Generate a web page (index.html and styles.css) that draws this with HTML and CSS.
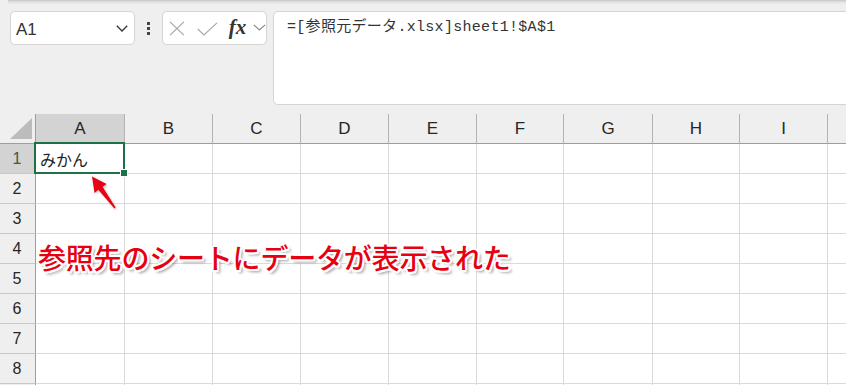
FILE: index.html
```html
<!DOCTYPE html>
<html lang="ja">
<head>
<meta charset="utf-8">
<title>Excel 参照</title>
<link rel="stylesheet" href="styles.css">
</head>
<body>
<div class="ribbon-edge"></div>
<div class="toolbar">
  <div class="namebox">
    <span class="nb-text">A1</span>
    <svg class="nb-chev" width="12" height="7" viewBox="0 0 12 7"><polyline points="0.8,0.8 6,6 11.2,0.8" fill="none" stroke="#333" stroke-width="1.3"/></svg>
  </div>
  <div class="dots"><span></span><span></span><span></span></div>
  <div class="fbtns">
    <svg class="ic-x" width="16" height="15" viewBox="0 0 16 15"><path d="M1 0.8 L15 14.2 M15 0.8 L1 14.2" stroke="#aaa" stroke-width="1.3" fill="none"/></svg>
    <svg class="ic-ok" width="21" height="14" viewBox="0 0 21 14"><polyline points="0.8,7 7,13 20.2,0.8" fill="none" stroke="#aaa" stroke-width="1.3"/></svg>
    <span class="fx">fx</span>
    <svg class="ic-chev" width="13" height="7" viewBox="0 0 13 7"><polyline points="0.8,0.8 6.5,6 12.2,0.8" fill="none" stroke="#888" stroke-width="1.2"/></svg>
  </div>
  <div class="formula">=[参照元データ.xlsx]sheet1!$A$1</div>
</div>
<div class="sheet">
<div class="grid">
  <div class="corner"><svg width="24" height="23" viewBox="0 0 24 23"><polygon points="1,22 23,22 23,1" fill="#bcbcbc"/></svg></div>
  <div class="ch sel">A</div><div class="ch">B</div><div class="ch">C</div><div class="ch">D</div><div class="ch">E</div><div class="ch">F</div><div class="ch">G</div><div class="ch">H</div><div class="ch">I</div><div class="ch"></div>

  <div class="rh sel">1</div><div class="c a1"><span>みかん</span><div class="selbox"><div class="handle"></div></div></div><div class="c"></div><div class="c"></div><div class="c"></div><div class="c"></div><div class="c"></div><div class="c"></div><div class="c"></div><div class="c"></div><div class="c"></div>
  <div class="rh">2</div><div class="c"></div><div class="c"></div><div class="c"></div><div class="c"></div><div class="c"></div><div class="c"></div><div class="c"></div><div class="c"></div><div class="c"></div><div class="c"></div>
  <div class="rh">3</div><div class="c"></div><div class="c"></div><div class="c"></div><div class="c"></div><div class="c"></div><div class="c"></div><div class="c"></div><div class="c"></div><div class="c"></div><div class="c"></div>
  <div class="rh">4</div><div class="c"></div><div class="c"></div><div class="c"></div><div class="c"></div><div class="c"></div><div class="c"></div><div class="c"></div><div class="c"></div><div class="c"></div><div class="c"></div>
  <div class="rh">5</div><div class="c"></div><div class="c"></div><div class="c"></div><div class="c"></div><div class="c"></div><div class="c"></div><div class="c"></div><div class="c"></div><div class="c"></div><div class="c"></div>
  <div class="rh">6</div><div class="c"></div><div class="c"></div><div class="c"></div><div class="c"></div><div class="c"></div><div class="c"></div><div class="c"></div><div class="c"></div><div class="c"></div><div class="c"></div>
  <div class="rh">7</div><div class="c"></div><div class="c"></div><div class="c"></div><div class="c"></div><div class="c"></div><div class="c"></div><div class="c"></div><div class="c"></div><div class="c"></div><div class="c"></div>
  <div class="rh">8</div><div class="c"></div><div class="c"></div><div class="c"></div><div class="c"></div><div class="c"></div><div class="c"></div><div class="c"></div><div class="c"></div><div class="c"></div><div class="c"></div>
  <div class="rh"></div><div class="c"></div><div class="c"></div><div class="c"></div><div class="c"></div><div class="c"></div><div class="c"></div><div class="c"></div><div class="c"></div><div class="c"></div><div class="c"></div>
</div>
</div>
<svg class="arrow" width="846" height="385" viewBox="0 0 846 385">
  <defs>
    <filter id="sh" x="-50%" y="-50%" width="200%" height="200%"><feDropShadow dx="1" dy="1" stdDeviation="0.8" flood-color="#000" flood-opacity="0.3"/></filter>
  </defs>
  <polygon filter="url(#sh)" fill="#e60012" points="92,176.5 106.5,184 102.5,186.8 115.6,207.6 114.4,208.4 98.3,189.8 94.5,193"/>
</svg>
<div class="note">参照先のシートにデータが表示された</div>
</body>
</html>
```
FILE: styles.css
```css
* { box-sizing: border-box; }
html, body { margin: 0; padding: 0; }
body {
  width: 846px;
  height: 385px;
  overflow: hidden;
  position: relative;
  background: #efefef;
  font-family: "Liberation Sans", "Noto Sans CJK JP", sans-serif;
  color: #333;
}
.ribbon-edge {
  height: 4px;
  margin-left: 8px;
  background: linear-gradient(#c6c6c6, #dcdcdc 40%, #efefef);
}
.toolbar {
  display: flex;
  align-items: flex-start;
  padding: 7px 0 0 10px;
  height: 101px;
  margin-bottom: 9px;
  overflow: hidden;
}
.namebox {
  width: 125px;
  height: 34px;
  background: #fff;
  border: 1px solid #d4d4d4;
  border-radius: 5px;
  display: flex;
  align-items: center;
  justify-content: space-between;
  padding: 3px 6px 0 5px;
  flex-shrink: 0;
}
.nb-text { font-size: 17px; color: #333; }
.nb-chev { margin-top: -3px; }
.dots {
  width: 27px;
  height: 34px;
  display: flex;
  flex-direction: column;
  align-items: center;
  justify-content: center;
  gap: 2px;
  padding-top: 1px;
  flex-shrink: 0;
}
.dots span { width: 3px; height: 3px; background: #444; }
.fbtns {
  width: 105px;
  height: 34px;
  background: #fff;
  border: 1px solid #d4d4d4;
  border-radius: 5px;
  display: flex;
  align-items: center;
  padding-left: 6px;
  flex-shrink: 0;
}
.ic-x { margin-top: 1px; }
.ic-ok { margin-left: 12px; margin-top: 2px; }
.fx {
  margin-left: 11px;
  font-family: "Liberation Serif", serif;
  font-style: italic;
  font-weight: bold;
  font-size: 21px;
  color: #333;
  line-height: 1;
  margin-top: -2px;
}
.ic-chev { margin-left: 7px; margin-top: -2px; }
.formula {
  flex: 1;
  margin-left: 6px;
  margin-right: -10px;
  height: 94px;
  background: #fff;
  border: 1px solid #d4d4d4;
  border-radius: 5px;
  padding: 6px 0 0 13px;
  font-family: "Liberation Mono", "Noto Sans CJK JP", monospace;
  font-size: 15px;
  line-height: 20px;
  color: #333;
  letter-spacing: 0.3px;
}
.sheet {
  width: 846px;
  height: 271px;
  overflow: hidden;
}
.grid {
  display: grid;
  grid-template-columns: 36px 89px 88px 88px 88px 88px 87px 89px 87px 88px 88px;
  grid-auto-rows: 30px;
  width: 916px;
}
.corner {
  background: #efefef;
  border-right: 1px solid #9d9d9d;
  border-bottom: 1px solid #9d9d9d;
  display: flex;
  align-items: flex-end;
  justify-content: flex-end;
  padding: 0 2px 3px 0;
}
.corner svg { display: block; }
.ch {
  background: #efefef;
  border-right: 1px solid #b3b3b3;
  border-bottom: 1px solid #9d9d9d;
  display: flex;
  align-items: center;
  justify-content: center;
  font-size: 17px;
  color: #262626;
  padding-top: 1px;
}
.rh {
  background: #efefef;
  border-right: 1px solid #9d9d9d;
  border-bottom: 1px solid #c8c8c8;
  display: flex;
  align-items: center;
  justify-content: center;
  font-size: 16px;
  color: #262626;
  padding-top: 1px;
  padding-right: 1px;
}
.ch.sel, .rh.sel { background: #d3d3d3; }
.rh.sel { color: #3d5a3d; }
.c {
  background: #fff;
  border-right: 1px solid #dadada;
  border-bottom: 1px solid #dadada;
}
.a1 {
  position: relative;
  display: flex;
  align-items: center;
  padding-left: 4px;
  font-family: "Noto Sans CJK JP", sans-serif;
  font-size: 16px;
  color: #222;
}
.selbox {
  position: absolute;
  left: -2px;
  top: -2px;
  right: -1px;
  bottom: -1px;
  border: 2px solid #1e7145;
}
.handle {
  position: absolute;
  right: -4px;
  bottom: -4px;
  width: 6px;
  height: 6px;
  background: #1e7145;
  outline: 1px solid #fff;
}
.arrow {
  position: absolute;
  left: 0;
  top: 0;
  pointer-events: none;
}
.note {
  position: absolute;
  left: 38px;
  top: 241px;
  font-family: "Noto Sans CJK JP", sans-serif;
  font-size: 28px;
  line-height: 32px;
  font-weight: 500;
  color: #e60012;
  white-space: nowrap;
  letter-spacing: -0.2px;
  text-shadow:
    -2px 0 0 #fff, 2px 0 0 #fff, 0 -2px 0 #fff, 0 2px 0 #fff,
    -1.5px -1.5px 0 #fff, 1.5px -1.5px 0 #fff, -1.5px 1.5px 0 #fff, 1.5px 1.5px 0 #fff,
    3px 3px 3px rgba(0,0,0,0.4);
}
```
